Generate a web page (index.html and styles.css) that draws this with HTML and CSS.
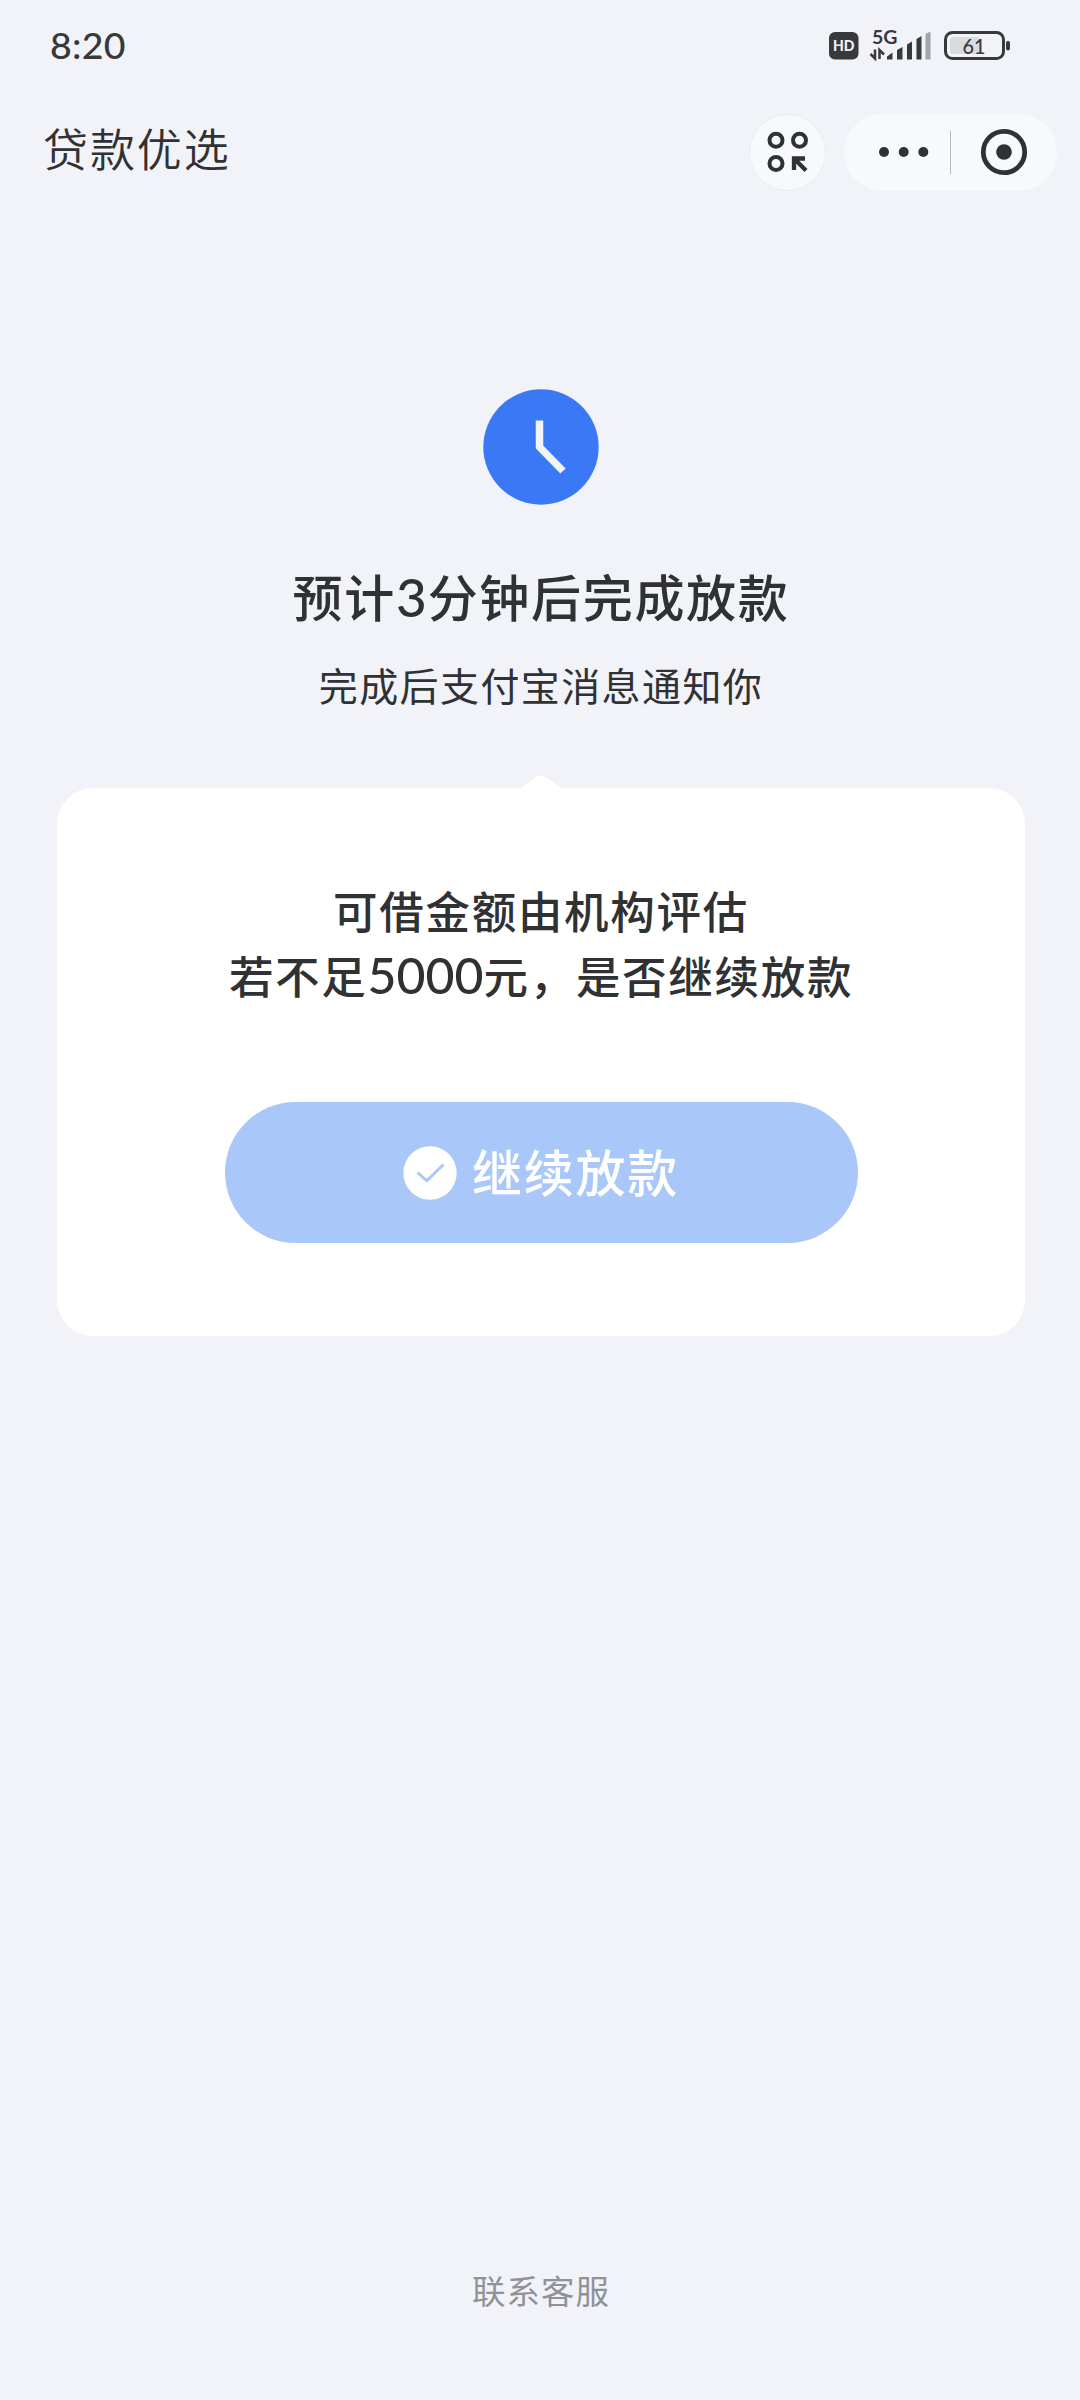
FILE: index.html
```html
<!DOCTYPE html>
<html lang="zh-CN">
<head>
<meta charset="utf-8">
<title>贷款优选</title>
<link rel="stylesheet" href="styles.css">
</head>
<body>
<div class="screen">
  <header class="status-bar">
    <span class="time">8:20</span>
    <svg class="status-icons" viewBox="0 0 220 70" width="220" height="70" aria-label="HD 5G 61%">
      <rect x="19" y="22" width="29.500" height="27.500" rx="6" fill="#38393b"/>
      <text class="hd" x="23" y="41" textLength="21.500" lengthAdjust="spacingAndGlyphs">HD</text>
      <text class="net" x="62" y="34" textLength="25.500" lengthAdjust="spacingAndGlyphs">5G</text>
      <path d="M65 39.500V48.500l-4.500-4.500M69.500 49V40l4.500 4.500" fill="none" stroke="#38393b" stroke-width="2.500"/>
      <g fill="#38393b">
        <path d="M77 49.500v-3l5.500-4v7zM87 49.500V40l5.500-3v12.500zM97 49.500V34.500l5-3v18zM106.500 49.500V29l5-3v23.500z"/>
        <path d="M115.500 49.500V24l5-2.500v28z" fill="#a3a4a7"/>
        <rect x="196" y="31" width="4" height="9.500" rx="2"/>
      </g>
      <rect x="140" y="27" width="30" height="17" rx="3" fill="#dadbdd"/>
      <rect x="135.500" y="22.500" width="58" height="26" rx="7" fill="none" stroke="#38393b" stroke-width="3"/>
      <text class="level" x="152.500" y="43.500" textLength="23" lengthAdjust="spacingAndGlyphs">61</text>
    </svg>
  </header>

  <nav class="nav-bar">
    <h1 class="nav-title">贷款优选</h1>
    <button class="round-button" aria-label="小程序">
      <svg viewBox="0 0 42 42" width="42" height="42" fill="none" stroke="#303133" stroke-width="4">
        <circle cx="9" cy="9.300" r="6.500"/><circle cx="32.500" cy="9.300" r="6.500"/><circle cx="9" cy="32.500" r="6.500"/>
        <path d="M27 39V27.500H38M27.500 28L39 39.500" stroke-width="4.300"/>
      </svg>
    </button>
    <div class="capsule">
      <svg class="more" viewBox="0 0 50 10" width="50" height="10" fill="#303133">
        <circle cx="5" cy="5" r="5"/><circle cx="24.700" cy="5" r="5"/><circle cx="44.300" cy="5" r="5"/>
      </svg>
      <span class="divider"></span>
      <svg class="target" viewBox="0 0 48 48" width="48" height="48">
        <circle cx="24" cy="24" r="20.700" fill="none" stroke="#303133" stroke-width="4.800"/>
        <circle cx="24" cy="24" r="7.800" fill="#303133"/>
      </svg>
    </div>
  </nav>

  <main class="content">
    <svg class="clock" viewBox="0 0 116 116" width="116" height="116">
      <circle cx="58" cy="58" r="57.700" fill="#3b78f6"/>
      <path d="M56.500 31.500V58L80 82" fill="none" stroke="#f1f3f8" stroke-width="7.500" stroke-linejoin="round"/>
    </svg>
    <h2 class="headline">预计<span class="digits">3</span>分钟后完成放款</h2>
    <p class="subline">完成后支付宝消息通知你</p>

    <section class="card">
      <svg class="card-tip" viewBox="0 0 46 14" width="46" height="14"><path d="M0 14C4 13 6 10 18 2.200Q23-1 28 2.200C40 10 42 13 46 14z" fill="#fff"/></svg>
      <p class="question">可借金额由机构评估<br>若不足<span class="digits">5000</span>元，是否继续放款</p>
      <button class="confirm">
        <svg viewBox="0 0 54 54" width="54" height="54">
          <circle cx="27" cy="27" r="26.700" fill="#fff"/>
          <path d="M14.500 26.500L23.800 34.800L40.500 18.500" fill="none" stroke="#a9c7f9" stroke-width="3"/>
        </svg>
        <span class="confirm-label">继续放款</span>
      </button>
    </section>
  </main>

  <footer class="service">联系客服</footer>
</div>
</body>
</html>
```
FILE: styles.css
```css
* { box-sizing: border-box; margin: 0; padding: 0; }

body {
  background: #f1f3f8;
  color: #303133;
  font-family: "Noto Sans CJK SC", sans-serif;
}

button { border: 0; font: inherit; color: inherit; }
svg { display: block; flex: none; }

.screen {
  width: 1080px;
  height: 2400px;
  display: flex;
  flex-direction: column;
  overflow: hidden;
}

.status-bar {
  height: 90px;
  padding: 10px 50px 10px 50px;
  display: flex;
  justify-content: space-between;
}
.time {
  font: 500 37.500px/70px Lato, sans-serif;
  letter-spacing: 0.300px;
  color: #38393b;
}
.hd, .net, .level { font-family: Lato, sans-serif; fill: #38393b; }
.hd { font-size: 15.500px; font-weight: 900; fill: #f1f3f8; }
.net { font-size: 19px; font-weight: 700; }
.level { font-size: 22px; font-weight: 500; }

.nav-bar {
  height: 125px;
  padding: 0 23px 1px 43px;
  display: flex;
  align-items: center;
}
.nav-title {
  flex: 1;
  font-size: 45px;
  font-weight: 350;
  letter-spacing: 1.900px;
  line-height: 66px;
  padding-bottom: 9px;
}
.round-button {
  width: 77px;
  height: 77px;
  border-radius: 50%;
  background: #f8f9fb;
  border: 1px solid #ebecef;
  display: grid;
  place-items: center;
  margin-right: 18px;
}
.capsule {
  width: 213px;
  height: 77px;
  border-radius: 39px;
  background: #f8f9fb;
  display: flex;
  align-items: center;
  padding-left: 35px;
}
.divider { width: 1px; height: 43px; margin: 0 29px 0 21px; background: #b9babd; }

.content {
  display: flex;
  flex-direction: column;
  align-items: center;
  padding: 174px 0 0 2px;
}
.headline {
  margin-top: 52px;
  height: 76px;
  font-size: 50px;
  font-weight: 500;
  line-height: 76px;
  letter-spacing: 1.700px;
}
.digits { font-family: Lato, sans-serif; line-height: 1; }
.headline .digits { font-size: 53px; letter-spacing: 1px; }
.subline {
  margin-top: 21px;
  font-size: 39px;
  line-height: 60px;
  letter-spacing: 1.400px;
}

.card {
  position: relative;
  width: 968px;
  height: 548px;
  margin-top: 74px;
  border-radius: 36px;
  background: #fff;
  display: flex;
  flex-direction: column;
  align-items: center;
  padding-top: 89px;
}
.card-tip { position: absolute; top: -13px; left: 461px; }
.question {
  font-size: 44.500px;
  font-weight: 500;
  line-height: 65px;
  letter-spacing: 1.700px;
  text-align: center;
}
.question .digits { font-size: 50px; letter-spacing: 0; }
.confirm {
  width: 633px;
  height: 141px;
  margin-top: 95px;
  border-radius: 71px;
  background: #a9c7f9;
  color: #fff;
  display: flex;
  align-items: center;
  justify-content: center;
  gap: 15px;
  font-size: 50px;
  font-weight: 500;
  letter-spacing: 1.700px;
}
.confirm-label { padding-bottom: 6px; }

.service {
  margin: auto 0 85px;
  padding-left: 2px;
  text-align: center;
  font-size: 33.500px;
  line-height: 50px;
  letter-spacing: 1px;
  color: #919297;
}
```
